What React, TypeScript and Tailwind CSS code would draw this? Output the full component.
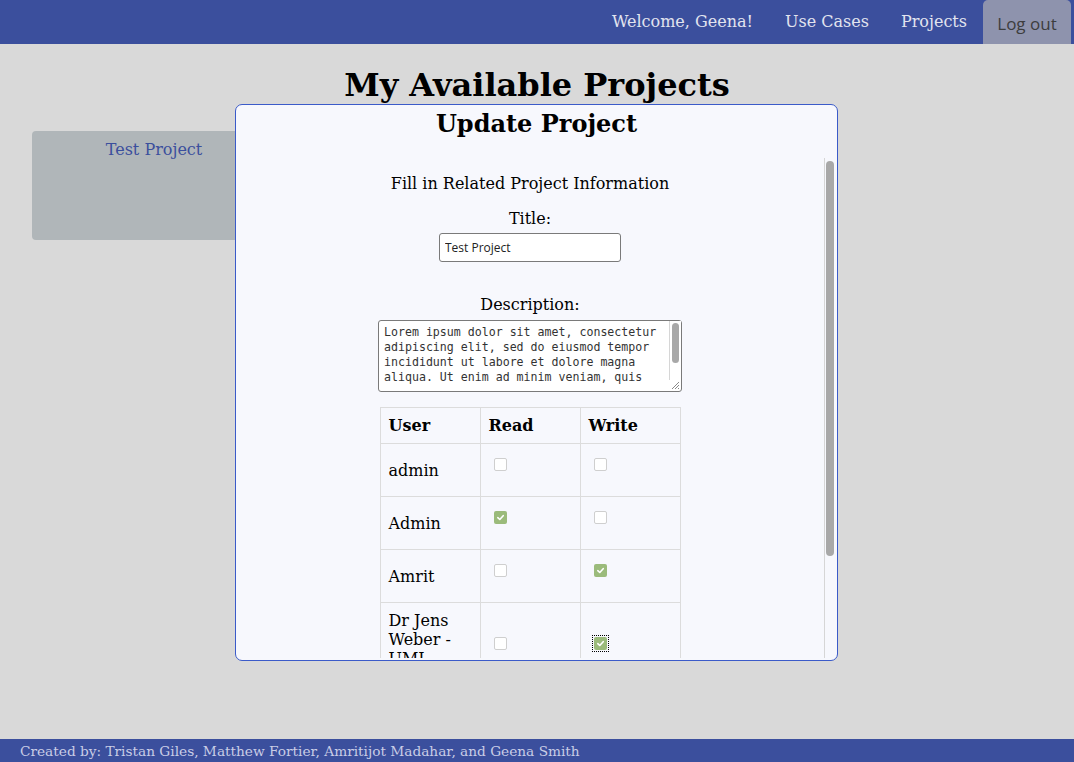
import { useState } from 'react';

const serif = "font-['DejaVu_Serif',serif]";

const users = [
  { name: 'admin', read: false, write: false },
  { name: 'Admin', read: true, write: false },
  { name: 'Amrit', read: false, write: true },
  { name: 'Dr Jens Weber - UML Expert', read: false, write: true, focus: true },
];

const Check = ({ checked, focus }: { checked: boolean; focus?: boolean }) => (
  <span className={`inline-flex ml-[5px] mt-[6px] ${focus ? 'outline outline-1 outline-dotted outline-black outline-offset-[1px]' : ''}`}>
    {checked ? (
      <span className="w-[13px] h-[13px] rounded-[2px] bg-[#9bbb7b] flex items-center justify-center">
        <svg width="9" height="9" viewBox="0 0 10 10">
          <path d="M2 5.2 L4.2 7.2 L8 3" fill="none" stroke="white" strokeWidth="1.8" strokeLinecap="round" strokeLinejoin="round" />
        </svg>
      </span>
    ) : (
      <span className="w-[13px] h-[13px] rounded-[2px] bg-white border border-[#cfcfcf]" />
    )}
  </span>
);

export default function App() {
  const [title, setTitle] = useState('Test Project');
  const [desc, setDesc] = useState(
    'Lorem ipsum dolor sit amet, consectetur adipiscing elit, sed do eiusmod tempor incididunt ut labore et dolore magna aliqua. Ut enim ad minim veniam, quis nostrud exercitation ullamco laboris nisi ut aliquip ex ea commodo consequat.'
  );

  return (
    <div className={`relative min-h-screen flex flex-col bg-[#d9d9d9] ${serif}`}>
      {/* nav */}
      <nav className="h-[44px] bg-[#3b4f9d] flex justify-end pr-[3px]">
        <a className="px-[16px] flex items-center text-[16px] text-[#e2e4ef]">Welcome, Geena!</a>
        <a className="px-[16px] flex items-center text-[16px] text-[#e2e4ef]">Use Cases</a>
        <a className="px-[16px] flex items-center text-[16px] text-[#e2e4ef]">Projects</a>
        <button className="w-[88px] bg-[#8e93ad] rounded-t-[5px] pt-[4px] text-[17px] text-[#3d3d3d] font-['Open_Sans',sans-serif]">
          Log out
        </button>
      </nav>

      {/* main */}
      <main className="flex-1">
        <h1 className="text-center font-bold text-[32px] leading-[36px] mt-[23px] text-black">My Available Projects</h1>
        <div className="ml-[32px] mt-[28px] w-[244px] h-[109px] rounded-[4px] bg-[#b0b6b9] pt-[9px] text-center text-[16px] leading-[20px] text-[#3b4f9d]">
          Test Project
        </div>
      </main>

      {/* footer */}
      <footer className="h-[23px] bg-[#3b4f9d] pl-[20px] text-[13.7px] leading-[25px] text-[#c9cde6]">
        Created by: Tristan Giles, Matthew Fortier, Amritijot Madahar, and Geena Smith
      </footer>

      {/* modal */}
      <div className="absolute left-[235px] top-[104px] w-[603px] h-[557px] bg-[#f7f8fd] border border-[#3b5bc9] rounded-[7px] flex flex-col overflow-hidden">
        <h2 className="text-center font-bold text-[24px] leading-[30px] mt-[4px] text-black">Update Project</h2>
        <div className="flex flex-1 mt-[19px] mb-[2px] min-h-0">
          <div className="flex-1 overflow-hidden text-center text-black">
            <p className="mt-[14px] text-[16px] leading-[24px]">Fill in Related Project Information</p>
            <label className="block mt-[11px] text-[16px] leading-[24px]">Title:</label>
            <input
              value={title}
              onChange={(e) => setTitle(e.target.value)}
              className="block mx-auto mt-[2px] w-[182px] h-[29px] rounded-[3px] border border-[#7a7a7a] bg-white px-[5px] text-[12px] text-[#222] font-['Open_Sans',sans-serif] outline-none"
            />
            <label className="block mt-[31px] text-[16px] leading-[24px]">Description:</label>
            <div className="relative mx-auto mt-[3px] w-[304px] h-[72px] rounded-[3px] border border-[#7a7a7a] bg-white pl-[5px] pr-[13px] pt-[4px] text-left">
              <textarea
                value={desc}
                onChange={(e) => setDesc(e.target.value)}
                className="block w-full h-[60px] p-0 text-[11.6px] leading-[15px] text-[#333] font-['DejaVu_Sans_Mono',monospace] overflow-hidden resize-none outline-none"
              />
              <div className="absolute right-0 top-0 bottom-[11px] w-[12px] border-l border-[#d6d6d6] bg-white">
                <div className="ml-[2px] mt-[2px] w-[7px] h-[40px] rounded-full bg-[#a8a8a8]" />
              </div>
              <svg className="absolute right-[1px] bottom-[1px]" width="10" height="10" viewBox="0 0 10 10">
                <path d="M9 2 L2 9 M9 5 L5 9 M9 8 L8 9" stroke="#8a8a8a" strokeWidth="1" />
              </svg>
            </div>
            <table className="mx-auto mt-[15px] w-[300px] border-collapse table-fixed text-[16px] leading-[19px] text-left">
              <thead>
                <tr>
                  <th className="w-[100px] border border-[#dcdcdc] p-[8px] font-bold">User</th>
                  <th className="w-[100px] border border-[#dcdcdc] p-[8px] font-bold">Read</th>
                  <th className="w-[100px] border border-[#dcdcdc] p-[8px] font-bold">Write</th>
                </tr>
              </thead>
              <tbody>
                {users.map((u) => (
                  <tr key={u.name}>
                    <td className="border border-[#dcdcdc] p-[8px] align-middle">{u.name}</td>
                    <td className="border border-[#dcdcdc] p-[8px] align-middle">
                      <div className="flex h-[36px] items-start"><Check checked={u.read} /></div>
                    </td>
                    <td className="border border-[#dcdcdc] p-[8px] align-middle">
                      <div className="flex h-[36px] items-start"><Check checked={u.write} focus={u.focus} /></div>
                    </td>
                  </tr>
                ))}
              </tbody>
            </table>
          </div>
          {/* scrollbar */}
          <div className="w-[11px] mr-[2px] border-l border-[#d6d6d6]">
            <div className="ml-[1px] mt-[3px] w-[8px] h-[395px] rounded-full bg-[#a8a8a8]" />
          </div>
        </div>
      </div>
    </div>
  );
}
